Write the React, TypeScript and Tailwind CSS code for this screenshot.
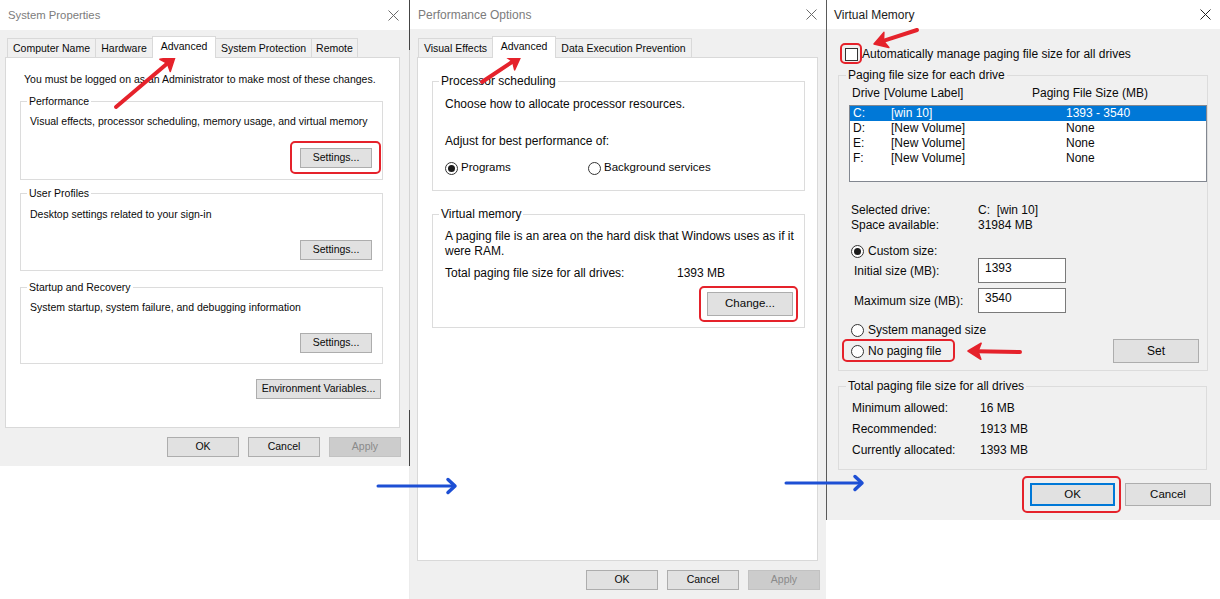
import React from "react";

const TXT = "text-[#0a0a0a]";

function CloseX({ dark }: { dark?: boolean }) {
  return (
    <svg width="11" height="11" viewBox="0 0 11 11">
      <path d="M0.5 0.5 L10.5 10.5 M10.5 0.5 L0.5 10.5" stroke={dark ? "#222" : "#6a6a6a"} strokeWidth="1" />
    </svg>
  );
}

function Btn({ cls, children, disabled, primary }: { cls: string; children: React.ReactNode; disabled?: boolean; primary?: boolean }) {
  const look = disabled
    ? "bg-[#cccccc] border border-[#c2c2c2] text-[#8a8a8a]"
    : primary
    ? "bg-[#e1e1e1] border-2 border-[#0078d7] text-[#0a0a0a]"
    : "bg-[#e1e1e1] border border-[#adadad] text-[#0a0a0a]";
  return <div className={`flex items-center justify-center shrink-0 ${look} ${cls}`}>{children}</div>;
}

function Tab({ cls, children, active }: { cls: string; children: React.ReactNode; active?: boolean }) {
  return active ? (
    <div className={`relative z-10 -ml-px mb-[-1px] h-[22px] bg-white border-l border-r border-t border-[#d9d9d9] flex items-start pt-[2px] justify-center ${cls}`}>
      {children}
    </div>
  ) : (
    <div className={`-ml-px h-[19px] bg-[#f0f0f0] border-l border-r border-t border-[#d9d9d9] flex items-center justify-center ${cls}`}>
      {children}
    </div>
  );
}

function Group({ label, cls, legendCls, children }: { label: string; cls: string; legendCls: string; children: React.ReactNode }) {
  return (
    <fieldset className={`border border-[#dcdcdc] ${cls}`}>
      <legend className={`px-[2px] leading-[14px] ${legendCls}`}>{label}</legend>
      {children}
    </fieldset>
  );
}

function Radio({ checked }: { checked?: boolean }) {
  return (
    <span className="w-[13px] h-[13px] rounded-full border border-[#333] bg-white flex items-center justify-center shrink-0">
      {checked && <span className="w-[7px] h-[7px] rounded-full bg-[#1b1b1b]" />}
    </span>
  );
}

function RedArrow({ x1, y1, x2, y2 }: { x1: number; y1: number; x2: number; y2: number }) {
  const dx = x2 - x1;
  const dy = y2 - y1;
  const L = Math.hypot(dx, dy);
  const ux = dx / L;
  const uy = dy / L;
  const hl = 13;
  const hw = 8;
  const bx = x2 - ux * hl;
  const by = y2 - uy * hl;
  const pts = `${x2},${y2} ${bx + uy * hw},${by - ux * hw} ${bx + ux * 3},${by + uy * 3} ${bx - uy * hw},${by + ux * hw}`;
  return (
    <g>
      <line x1={x1} y1={y1} x2={bx + ux * 4} y2={by + uy * 4} stroke="#e5222b" strokeWidth="4" strokeLinecap="round" />
      <polygon points={pts} fill="#e5222b" stroke="#e5222b" strokeWidth="1.5" strokeLinejoin="round" />
    </g>
  );
}

function BlueArrow({ x1, x2, y }: { x1: number; x2: number; y: number }) {
  return (
    <g stroke="#1d4fd4" fill="none" strokeLinecap="round" strokeLinejoin="round">
      <line x1={x1} y1={y} x2={x2 - 1} y2={y} strokeWidth="3" />
      <polyline points={`${x2 - 7},${y - 6.5} ${x2},${y} ${x2 - 7},${y + 6.5}`} strokeWidth="3.5" />
    </g>
  );
}

function RedBox({ cls }: { cls: string }) {
  return <span className={`absolute border-2 border-[#e5222b] rounded-[5px] pointer-events-none ${cls}`} />;
}

function SystemProperties() {
  return (
    <div className="w-[409px] h-[466px] flex flex-col shrink-0">
      <div className="h-[30px] bg-white flex items-center justify-between pl-[8px] pr-[10px]">
        <span className="text-[11.3px] leading-[14px] text-[#7c7c7c]">System Properties</span>
        <CloseX />
      </div>
      <div className={`flex-1 bg-[#f0f0f0] pl-[5px] pr-[9px] pt-[6px] flex flex-col text-[10.5px] ${TXT}`}>
        <div className="flex items-end h-[21px] ml-[3px] leading-[14px]">
          <Tab cls="w-[89px]">Computer Name</Tab>
          <Tab cls="w-[58px]">Hardware</Tab>
          <Tab cls="w-[64px]" active>Advanced</Tab>
          <Tab cls="w-[97px]">System Protection</Tab>
          <Tab cls="w-[47px]">Remote</Tab>
        </div>
        <div className="h-[371px] bg-white border border-[#d9d9d9] pt-[14px] pl-[14px] flex flex-col">
          <div className="pl-[4px] leading-[14px]">You must be logged on as an Administrator to make most of these changes.</div>
          <Group label="Performance" cls="w-[363px] mt-[8px]" legendCls="ml-[6px]">
            <div className="pl-[9px] pr-[10px] pb-[11px] pt-[6px]">
              <div className="leading-[14px]">Visual effects, processor scheduling, memory usage, and virtual memory</div>
              <div className="flex justify-end mt-[20px]">
                <div className="relative">
                  <Btn cls="w-[72px] h-[20px]">Settings...</Btn>
                  <RedBox cls="-left-[10px] -right-[9px] -top-[7px] -bottom-[6px]" />
                </div>
              </div>
            </div>
          </Group>
          <Group label="User Profiles" cls="w-[363px] mt-[6px]" legendCls="ml-[6px]">
            <div className="pl-[9px] pr-[10px] pb-[10px] pt-[7px]">
              <div className="leading-[14px]">Desktop settings related to your sign-in</div>
              <div className="flex justify-end mt-[19px]">
                <Btn cls="w-[72px] h-[20px]">Settings...</Btn>
              </div>
            </div>
          </Group>
          <Group label="Startup and Recovery" cls="w-[363px] mt-[9px]" legendCls="ml-[6px]">
            <div className="pl-[9px] pr-[10px] pb-[10px] pt-[6px]">
              <div className="leading-[14px]">System startup, system failure, and debugging information</div>
              <div className="flex justify-end mt-[19px]">
                <Btn cls="w-[72px] h-[20px]">Settings...</Btn>
              </div>
            </div>
          </Group>
          <div className="w-[363px] flex justify-end pr-[2px] mt-[15px]">
            <Btn cls="w-[125px] h-[20px]">Environment Variables...</Btn>
          </div>
        </div>
        <div className="flex justify-end gap-[9px] mt-[9px] -mr-[1px]">
          <Btn cls="w-[72px] h-[20px]">OK</Btn>
          <Btn cls="w-[72px] h-[20px]">Cancel</Btn>
          <Btn cls="w-[72px] h-[20px]" disabled>Apply</Btn>
        </div>
      </div>
    </div>
  );
}

function PerformanceOptions() {
  return (
    <div className="w-[417px] h-[599px] flex shrink-0">
      <div className="w-px flex flex-col shrink-0">
        <div className="h-[50px] bg-[#444]" />
        <div className="h-[360px] bg-[#d4d4d4]" />
        <div className="h-[56px] bg-[#444]" />
        <div className="flex-1 bg-[#ececec]" />
      </div>
      <div className="w-[416px] h-[599px] flex flex-col">
        <div className="h-[29px] bg-white flex items-center justify-between pl-[8px] pr-[9px]">
          <span className="text-[12px] leading-[14px] text-[#7c7c7c]">Performance Options</span>
          <CloseX />
        </div>
        <div className={`flex-1 bg-[#f0f0f0] pl-[7px] pr-[8px] pt-[7px] flex flex-col ${TXT}`}>
          <div className="flex items-end h-[21px] ml-[2px] leading-[14px] text-[10.5px]">
            <Tab cls="w-[75px]">Visual Effects</Tab>
            <Tab cls="w-[64px]" active>Advanced</Tab>
            <Tab cls="w-[137px]">Data Execution Prevention</Tab>
          </div>
          <div className="h-[504px] bg-white border border-[#d9d9d9] pt-[16px] pl-[14px] flex flex-col text-[12px]">
            <Group label="Processor scheduling" cls="w-[373px]" legendCls="ml-[6px]">
              <div className="pl-[12px] pt-[9px] pb-[15px]">
                <div className="leading-[14px]">Choose how to allocate processor resources.</div>
                <div className="leading-[14px] mt-[23px]">Adjust for best performance of:</div>
                <div className="flex h-[14px] items-center mt-[13px] text-[11.5px]">
                  <div className="w-[143px] flex items-center gap-[3px]">
                    <Radio checked />
                    <span>Programs</span>
                  </div>
                  <div className="flex items-center gap-[3px]">
                    <Radio />
                    <span>Background services</span>
                  </div>
                </div>
              </div>
            </Group>
            <Group label="Virtual memory" cls="w-[373px] mt-[16px]" legendCls="ml-[6px]">
              <div className="pl-[12px] pt-[8px] pb-[11px]">
                <div className="leading-[15px]">
                  A paging file is an area on the hard disk that Windows uses as if it
                  <br />
                  were RAM.
                </div>
                <div className="flex leading-[14px] mt-[7px]">
                  <span className="w-[232px]">Total paging file size for all drives:</span>
                  <span>1393 MB</span>
                </div>
                <div className="flex justify-end pr-[11px] mt-[12px]">
                  <div className="relative">
                    <Btn cls="w-[86px] h-[24px] text-[11.5px]">Change...</Btn>
                    <RedBox cls="-left-[8px] -right-[5px] -top-[6px] -bottom-[6px]" />
                  </div>
                </div>
              </div>
            </Group>
          </div>
          <div className="flex justify-end gap-[9px] mt-[9px] -mr-[2px] text-[10.5px]">
            <Btn cls="w-[72px] h-[20px]">OK</Btn>
            <Btn cls="w-[72px] h-[20px]">Cancel</Btn>
            <Btn cls="w-[72px] h-[20px]" disabled>Apply</Btn>
          </div>
        </div>
      </div>
    </div>
  );
}

function VirtualMemory() {
  const drives = [
    { d: "C:", l: "[win 10]", s: "1393 - 3540", sel: true },
    { d: "D:", l: "[New Volume]", s: "None" },
    { d: "E:", l: "[New Volume]", s: "None" },
    { d: "F:", l: "[New Volume]", s: "None" },
  ];
  return (
    <div className="w-[394px] h-[520px] border-l border-[#5a5a5a] flex flex-col shrink-0">
      <div className="h-[29px] bg-white flex items-center justify-between pl-[7px] pr-[9px]">
        <span className="text-[12px] leading-[14px] text-[#1b1b1b]">Virtual Memory</span>
        <CloseX dark />
      </div>
      <div className={`flex-1 bg-[#f0f0f0] pl-[11px] pr-[13px] pt-[18px] flex flex-col text-[12px] ${TXT}`}>
        <div className="flex items-center gap-[4px] h-[14px] ml-[7px]">
          <div className="relative">
            <span className="block w-[13px] h-[13px] bg-white border border-[#333]" />
            <RedBox cls="-left-[5px] -right-[4px] -top-[5px] -bottom-[3px]" />
          </div>
          <span className="leading-[14px]">Automatically manage paging file size for all drives</span>
        </div>
        <Group label="Paging file size for each drive" cls="mt-[7px]" legendCls="ml-[7px]">
          <div className="pl-[10px] pb-[7px]">
            <div className="flex leading-[14px] mt-[4px] pl-[3px]">
              <span className="w-[180px]">
                Drive<span className="ml-[4px]">[Volume Label]</span>
              </span>
              <span>Paging File Size (MB)</span>
            </div>
            <div className="mt-[5px] h-[77px] w-[358px] bg-white border border-[#828790]">
              {drives.map((r) => (
                <div key={r.d} className={`h-[15px] flex items-center pl-[3px] leading-[15px] ${r.sel ? "bg-[#0078d7] text-white" : ""}`}>
                  <span className="w-[38px]">{r.d}</span>
                  <span className="w-[175px]">{r.l}</span>
                  <span>{r.s}</span>
                </div>
              ))}
            </div>
            <div className="mt-[21px] pl-[2px] leading-[15px]">
              <div className="flex">
                <span className="w-[127px]">Selected drive:</span>
                <span>C:&nbsp;&nbsp;[win 10]</span>
              </div>
              <div className="flex">
                <span className="w-[127px]">Space available:</span>
                <span>31984 MB</span>
              </div>
            </div>
            <div className="mt-[11px] pl-[2px] h-[14px] flex items-center gap-[4px]">
              <Radio checked />
              <span>Custom size:</span>
            </div>
            <div className="flex items-center h-[25px]">
              <span className="w-[129px] pl-[5px]">Initial size (MB):</span>
              <div className="w-[88px] h-[25px] bg-white border border-[#7a7a7a] pl-[6px] pt-[2px] leading-[14px]">1393</div>
            </div>
            <div className="flex items-center h-[25px] mt-[5px]">
              <span className="w-[129px] pl-[5px]">Maximum size (MB):</span>
              <div className="w-[88px] h-[25px] bg-white border border-[#7a7a7a] pl-[6px] pt-[2px] leading-[14px]">3540</div>
            </div>
            <div className="mt-[10px] pl-[2px] h-[14px] flex items-center gap-[4px]">
              <Radio />
              <span>System managed size</span>
            </div>
            <div className="mt-[2px] h-[24px] flex items-center justify-between pl-[2px] pr-[8px]">
              <div className="relative flex items-center gap-[4px] h-[14px]">
                <Radio />
                <span>No paging file</span>
                <RedBox cls="-left-[9px] -right-[14px] -top-[5px] -bottom-[4px]" />
              </div>
              <Btn cls="w-[86px] h-[24px]">Set</Btn>
            </div>
          </div>
        </Group>
        <Group label="Total paging file size for all drives" cls="mt-[8px]" legendCls="ml-[7px]">
          <div className="pl-[13px] pt-[8px] pb-[12px] flex flex-col gap-[7px] leading-[14px]">
            <div className="flex">
              <span className="w-[128px]">Minimum allowed:</span>
              <span>16 MB</span>
            </div>
            <div className="flex">
              <span className="w-[128px]">Recommended:</span>
              <span>1913 MB</span>
            </div>
            <div className="flex">
              <span className="w-[128px]">Currently allocated:</span>
              <span>1393 MB</span>
            </div>
          </div>
        </Group>
        <div className="flex justify-end gap-[10px] mt-[13px] -mr-[4px] text-[11.5px]">
          <div className="relative">
            <Btn cls="w-[85px] h-[23px]" primary>OK</Btn>
            <RedBox cls="-left-[8px] -right-[6px] -top-[7px] -bottom-[7px]" />
          </div>
          <Btn cls="w-[86px] h-[23px]">Cancel</Btn>
        </div>
      </div>
    </div>
  );
}

export default function App() {
  return (
    <div className="relative w-[1220px] h-[599px] bg-white overflow-hidden flex items-start [font-family:'Liberation_Sans',Arial,sans-serif]">
      <SystemProperties />
      <PerformanceOptions />
      <VirtualMemory />
      <svg className="absolute inset-0 pointer-events-none" width="1220" height="599" viewBox="0 0 1220 599">
        <RedArrow x1={116} y1={107} x2={175} y2={57} />
        <RedArrow x1={482} y1={82} x2={521} y2={56} />
        <RedArrow x1={917} y1={30} x2={874} y2={44} />
        <RedArrow x1={1020} y1={352} x2={968} y2={351} />
        <BlueArrow x1={378} x2={455} y={486} />
        <BlueArrow x1={786} x2={862} y={483} />
      </svg>
    </div>
  );
}
